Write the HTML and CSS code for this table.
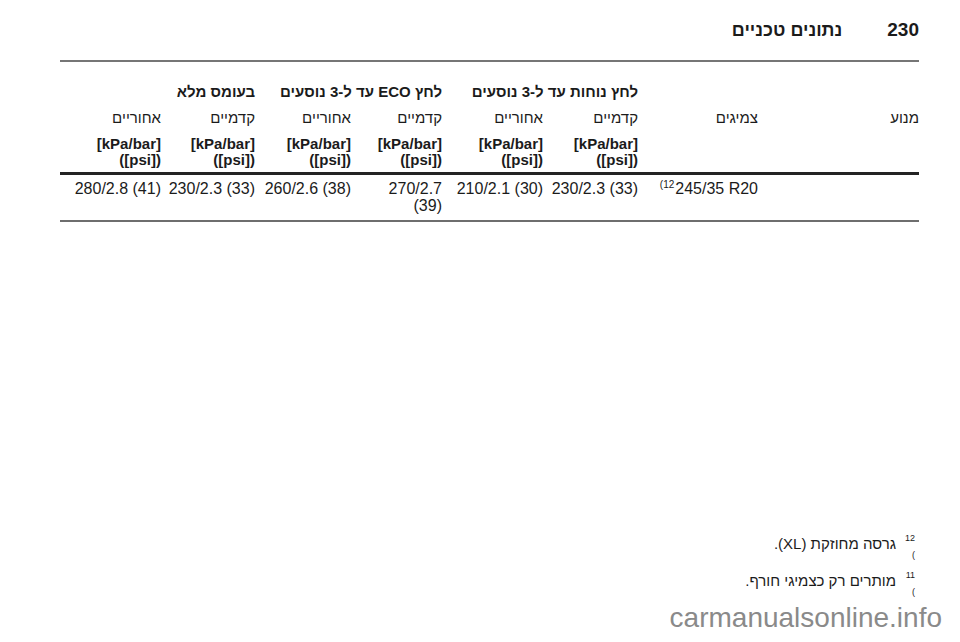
FILE: index.html
```html
<!DOCTYPE html>
<html lang="he" dir="rtl">
<head>
<meta charset="utf-8">
<title>230 נתונים טכניים</title>
<link rel="stylesheet" href="styles.css">
</head>
<body>
<div class="page">
  <header class="top">
    <span class="pnum">230</span>
    <span class="ptitle">נתונים טכניים</span>
  </header>

  <table class="tires">
    <colgroup>
      <col class="c-engine">
      <col class="c-tire">
      <col class="c1">
      <col class="c2">
      <col class="c3">
      <col class="c4">
      <col class="c5">
      <col class="c6">
    </colgroup>
    <thead>
      <tr class="groups">
        <th></th>
        <th></th>
        <th colspan="2">לחץ נוחות עד ל-3 נוסעים</th>
        <th colspan="2">לחץ ECO עד ל-3 נוסעים</th>
        <th colspan="2">בעומס מלא</th>
      </tr>
      <tr class="sub">
        <th>מנוע</th>
        <th>צמיגים</th>
        <th>קדמיים</th>
        <th>אחוריים</th>
        <th>קדמיים</th>
        <th>אחוריים</th>
        <th>קדמיים</th>
        <th>אחוריים</th>
      </tr>
      <tr class="units">
        <th></th>
        <th></th>
        <th><span class="ltr">[kPa/bar]<br>([psi])</span></th>
        <th><span class="ltr">[kPa/bar]<br>([psi])</span></th>
        <th><span class="ltr">[kPa/bar]<br>([psi])</span></th>
        <th><span class="ltr">[kPa/bar]<br>([psi])</span></th>
        <th><span class="ltr">[kPa/bar]<br>([psi])</span></th>
        <th><span class="ltr">[kPa/bar]<br>([psi])</span></th>
      </tr>
    </thead>
    <tbody>
      <tr>
        <td></td>
        <td><span class="ltr"><sup class="ref">(12</sup>245/35 R20</span></td>
        <td><span class="ltr">230/2.3 (33)</span></td>
        <td><span class="ltr">210/2.1 (30)</span></td>
        <td><span class="ltr">270/2.7<br>(39)</span></td>
        <td><span class="ltr">260/2.6 (38)</span></td>
        <td><span class="ltr">230/2.3 (33)</span></td>
        <td><span class="ltr">280/2.8 (41)</span></td>
      </tr>
    </tbody>
  </table>

  <section class="notes">
    <div class="note">
      <div class="mark"><span>12</span><span class="ltr" dir="ltr">(</span></div>
      <p class="ntext">גרסה מחוזקת (XL).</p>
    </div>
    <div class="note">
      <div class="mark"><span>11</span><span class="ltr" dir="ltr">(</span></div>
      <p class="ntext">מותרים רק כצמיגי חורף.</p>
    </div>
  </section>
</div>
<div class="watermark" dir="ltr">carmanualsonline.info</div>
</body>
</html>
```

FILE: styles.css
```css
html, body {
  margin: 0;
  padding: 0;
  background: #ffffff;
}

body {
  font-family: "Liberation Sans", Arial, "DejaVu Sans", sans-serif;
  color: #1b1b1b;
  width: 960px;
  height: 642px;
  position: relative;
  overflow: hidden;
}

.page {
  padding: 18px 41px 0 60px;
}

.ltr {
  direction: ltr;
  unicode-bidi: isolate;
}

/* page header */
.top {
  display: flex;
  gap: 45px;
  align-items: baseline;
  font-size: 19px;
  line-height: 24px;
  font-weight: bold;
  padding-bottom: 18px;
  border-bottom: 2px solid #767676;
}

.ptitle {
  font-size: 18px;
}

/* table */
.tires {
  width: 859px;
  table-layout: fixed;
  border-collapse: separate;
  border-spacing: 0;
}

.c-engine { width: 161px; }
.c-tire { width: 120px; }
.c1 { width: 95px; }
.c2 { width: 101px; }
.c3 { width: 91px; }
.c4 { width: 96px; }
.c5 { width: 94px; }
.c6 { width: 101px; }

.tires th,
.tires td {
  padding: 0;
  text-align: right;
  vertical-align: top;
}

.groups th {
  font-size: 15px;
  line-height: 18px;
  font-weight: bold;
  padding-top: 21px;
  white-space: nowrap;
}

.sub th {
  font-size: 15px;
  line-height: 18px;
  font-weight: normal;
  padding-top: 8px;
}

.units th {
  font-size: 15px;
  line-height: 16px;
  font-weight: bold;
  padding-top: 9px;
  padding-bottom: 4px;
  border-bottom: 3px solid #232323;
}

.tires td {
  font-size: 16px;
  line-height: 17px;
  padding-top: 5px;
  padding-bottom: 6px;
  white-space: nowrap;
  border-bottom: 2px solid #6e6e6e;
}

.ref {
  font-size: 10px;
  line-height: 0;
  vertical-align: 6px;
  margin-right: 1px;
}

/* footnotes */
.notes {
  margin-top: 308px;
}

.note {
  display: flex;
  margin-bottom: 3px;
}

.mark {
  width: 19px;
  padding-right: 4px;
  display: flex;
  flex-direction: column;
  align-items: flex-start;
  font-size: 9px;
  line-height: 17px;
}

.ntext {
  margin: 0;
  padding-top: 4px;
  font-size: 15px;
  line-height: 19px;
}

/* watermark overlay */
.watermark {
  position: absolute;
  top: 604px;
  right: 18px;
  font-size: 28px;
  line-height: 28px;
  color: #8a8a8a;
  font-family: "Liberation Sans", Arial, sans-serif;
}
```
